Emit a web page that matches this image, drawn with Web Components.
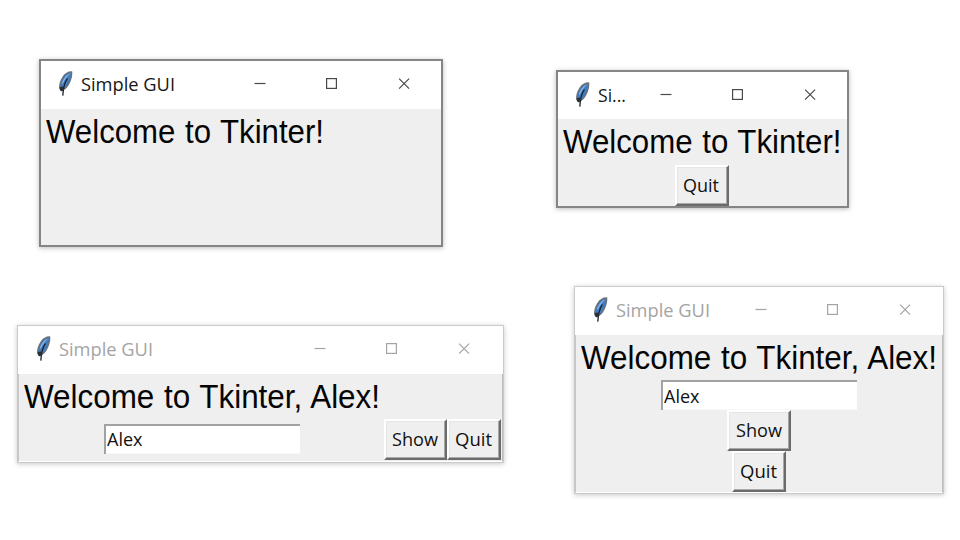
<!DOCTYPE html>
<html lang="en">
<head>
<meta charset="utf-8">
<title>Simple GUI</title>
<style>
html,body{margin:0;width:960px;height:540px;overflow:hidden;background:#fff}
</style>
</head>
<body>
<desk-top></desk-top>
<script>
const define = (name, html, setup) => {
  const t = document.createElement('template');
  t.innerHTML = html;
  customElements.define(name, class extends HTMLElement {
    connectedCallback() {
      if (this.shadowRoot) return;
      this.attachShadow({mode: 'open'}).append(t.content.cloneNode(true));
      if (setup) setup(this, this.shadowRoot);
    }
  });
};

// Text squeezed horizontally to the advance width given in the "w" attribute.
define('fit-text', `<style>
:host{display:block;white-space:nowrap;overflow:visible}
span{display:inline-block;transform-origin:0 50%}
</style><span></span>`, (el, root) => {
  const s = root.querySelector('span'), w = +el.getAttribute('w');
  s.textContent = el.getAttribute('text');
  el.style.width = w + 'px';
  s.style.transform = `scaleX(${w / s.getBoundingClientRect().width})`;
});

define('feather-icon', `<style>:host{display:block;width:18px;height:26px}svg{display:block}</style>
<svg width="18" height="26" viewBox="0 0 18 26">
<path d="M15.6 1C12.4 1 9 3 7 6.2C4.8 9.6 3.4 13.8 3.8 17.8L5.6 19.4C8.6 18.6 11.6 15.4 13.4 11.4C14.8 8.2 16 4.4 15.6 1Z" fill="#3f7cc0" stroke="#6c7177" stroke-width="1.3"/>
<path d="M14.2 2.6C10.6 3.6 7.4 7.8 5.8 12.4L6.8 12.6C8.8 8.4 11.2 5.2 14.2 2.6Z" fill="#8fb8e2"/>
<path d="M11.4 7.5C9 11 7.3 15 6.8 24.6" fill="none" stroke="#1a2028" stroke-width="1.3"/>
<path d="M3.8 16L4.2 19.4L6 20.4L8.4 17.8L7 15.4Z" fill="#2a3036"/>
</svg>`);

define('window-controls', `<style>
:host{display:block;width:164px;height:16px}svg{display:block}
</style><svg width="164" height="16" viewBox="0 0 164 16" fill="none" stroke="currentColor" stroke-width="1.2">
<path d="M2.5 7.5H13.5"/><rect x="74.6" y="2.6" width="9.8" height="9.8"/><path d="M147.1 2.6L157.1 12.6M157.1 2.6L147.1 12.6"/></svg>`);

define('tk-window', `<style>
:host{position:absolute;box-sizing:border-box;display:flex;flex-direction:column;border:2px solid #858585;background:#efefef;box-shadow:0 1px 5px rgba(0,0,0,.27)}
:host([inactive]){border:1px solid #cacaca;box-shadow:0 1px 5px rgba(0,0,0,.22)}
header{display:flex;align-items:center;justify-content:space-between;height:var(--bar,48px);flex:none;background:#fff;box-sizing:border-box;padding:0 25px 2px 15px;color:#161616;font:19px/26px "Open Sans","Noto Sans",sans-serif}
:host([inactive]) header{color:#a4a4a4;padding-left:16px;padding-right:var(--pr,27px)}
.name{display:flex;align-items:center;gap:7px}
.name slot{display:block}
window-controls{color:#4a4a4a}
:host([inactive]) window-controls{color:#a4a4a4}
main{flex:1;display:flex;flex-direction:column;min-height:0}
:host([inactive]) main{border:1px solid #c6c6c6;border-top:0;border-bottom-color:#fff;border-right-color:#bdbdbd}
</style><header><div class="name"><feather-icon></feather-icon><slot name="title"></slot></div><window-controls></window-controls></header><main><slot></slot></main>`);

define('tk-label', `<style>
:host{display:block;height:46px;padding-left:5px;box-sizing:border-box;color:#050505;font:32.4px/46px "Liberation Sans",Arial,sans-serif;word-spacing:1px}
</style><slot></slot>`);

define('tk-button', `<style>
:host{display:flex;box-sizing:border-box;height:41px;flex:none;align-items:center;justify-content:center;padding:0 1px 1px 0;border:2px solid;border-color:#fff #6b6b6b #6b6b6b #fff;box-shadow:inset -1px -1px #a8a8a8,inset 1px 1px #e5e5e5;color:#111;font:19px/26px "Open Sans","Noto Sans",sans-serif}
</style><slot></slot>`);

define('tk-entry', `<style>
:host{display:flex;align-items:center;box-sizing:border-box;width:196px;height:30px;background:#fff;border:solid #a2a2a2;border-width:2px 0 0 2px;padding:0 0 1px 1px;box-shadow:inset 0 -1px #f8f8f8;color:#111;font:19px/26px "Open Sans","Noto Sans",sans-serif}
</style><slot></slot>`);

define('desk-top', `<style>
:host{display:block;position:relative;width:960px;height:540px;background:#fff;overflow:hidden}
.a{left:39px;top:59px;width:404px;height:188px}
.b{left:556px;top:70px;width:293px;height:138px;--bar:47px}
.c{left:17px;top:325px;width:487px;height:138px}
.d{left:574px;top:286px;width:370px;height:208px;--pr:26px}
.col{display:flex;flex-direction:column;align-items:center}
.b .col{padding-right:2px}
.row{display:grid;grid-template-columns:1fr 63px 54px;align-items:center;justify-items:center;margin:-1px 1px 0 0}
.row tk-button{width:100%}
.row tk-entry{position:relative;top:-1px}
.q{width:54px}.s{width:64px}
</style>
<tk-window class="a"><fit-text slot="title" w="94" text="Simple GUI"></fit-text>
<tk-label><fit-text w="278" text="Welcome to Tkinter!"></fit-text></tk-label></tk-window>
<tk-window class="b"><fit-text slot="title" w="28" text="Si..."></fit-text>
<tk-label><fit-text w="278.5" text="Welcome to Tkinter!"></fit-text></tk-label>
<div class="col"><tk-button class="q"><fit-text w="36" text="Quit"></fit-text></tk-button></div></tk-window>
<tk-window class="c" inactive><fit-text slot="title" w="94" text="Simple GUI"></fit-text>
<tk-label><fit-text w="356" text="Welcome to Tkinter, Alex!"></fit-text></tk-label>
<div class="row"><tk-entry><fit-text w="35.5" text="Alex"></fit-text></tk-entry><tk-button><fit-text w="46" text="Show"></fit-text></tk-button><tk-button><fit-text w="37" text="Quit"></fit-text></tk-button></div></tk-window>
<tk-window class="d" inactive><fit-text slot="title" w="94" text="Simple GUI"></fit-text>
<tk-label><fit-text w="356" text="Welcome to Tkinter, Alex!"></fit-text></tk-label>
<div class="col" style="margin-top:-1px"><tk-entry><fit-text w="35.5" text="Alex"></fit-text></tk-entry><tk-button class="s"><fit-text w="46" text="Show"></fit-text></tk-button><tk-button class="q"><fit-text w="37" text="Quit"></fit-text></tk-button></div></tk-window>`);
</script>
</body>
</html>
